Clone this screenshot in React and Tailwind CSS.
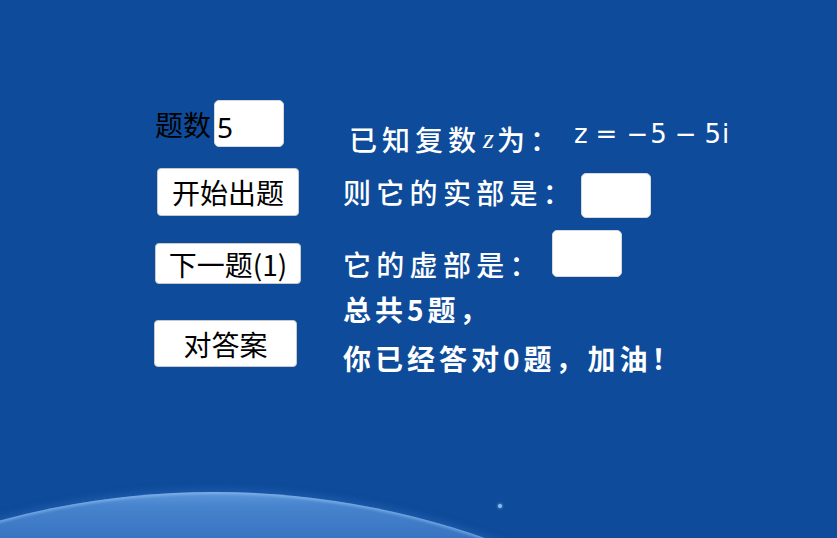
export default function App() {
  const cjk = { fontFamily: '"Noto Sans CJK SC", "Noto Sans", sans-serif' };
  return (
    <div className="relative h-[538px] w-full overflow-hidden bg-[#0e4b9a]" style={cjk}>
      {/* planet arc decoration */}
      <div className="absolute left-[-606px] top-[492px] h-[1640px] w-[1640px] rounded-full bg-[linear-gradient(to_bottom,#5c97da_0px,#4784cd_14px,#3672bf_50px)] shadow-[inset_0_2px_3px_rgba(150,195,245,0.6),0_-2px_8px_rgba(70,130,210,0.35)]" />
      <div className="absolute left-[498px] top-[504px] h-[4px] w-[4px] rounded-full bg-[#8dbbf0] shadow-[0_0_3px_#8dbbf0]" />

      <div className="relative flex pl-[154px] pt-[100px]">
        {/* left column */}
        <div className="flex w-[189px] flex-col items-start text-[28px] leading-none text-black">
          <div className="flex h-[47px] items-center">
            <span className="ml-[1px]">题数</span>
            <div className="ml-[3px] flex h-[47px] w-[70px] items-center rounded-[5px] border border-[#d8d8d8] bg-white pl-[2px] pt-[6px] text-[28px]" style={{ fontFamily: '"Noto Sans", sans-serif' }}>
              5
            </div>
          </div>
          <button className="ml-[3px] mt-[21px] flex h-[48px] w-[142px] items-center justify-center rounded-[4px] border border-[#c9c9c9] bg-white text-[28px] text-black">
            开始出题
          </button>
          <button className="ml-[1px] mt-[27px] flex h-[41px] w-[146px] items-center justify-center rounded-[4px] border border-[#c9c9c9] bg-white text-[28px] text-black">
            下一题(1)
          </button>
          <button className="mt-[36px] flex h-[47px] w-[143px] items-center justify-center rounded-[4px] border border-[#c9c9c9] bg-white text-[28px] text-black">
            对答案
          </button>
        </div>

        {/* right column */}
        <div className="flex flex-col pt-[15px] font-medium text-white">
          <div className="flex h-[48px] items-center pl-[6px] text-[28px] leading-none">
            <span className="tracking-[5px]">已知复数</span>
            <span className="ml-[2px] mr-[3px] text-[28px] italic" style={{ fontFamily: '"Liberation Serif", serif' }}>z</span>
            <span className="tracking-[5px]">为：</span>
            <span className="mb-[10px] ml-[11px] flex items-center text-[26px] font-normal leading-none" style={{ fontFamily: '"DejaVu Sans", sans-serif' }}>
              <span>z</span>
              <span className="ml-[8px]">=</span>
              <span className="ml-[9px]">−</span>
              <span className="ml-[2px]">5</span>
              <span className="ml-[8px]">−</span>
              <span className="ml-[8px]">5</span>
              <span className="ml-[1px]">i</span>
            </span>
          </div>
          <div className="mt-[10px] flex h-[45px] items-center text-[28px] leading-none">
            <span className="mb-[7px] tracking-[5.3px]">则它的实部是：</span>
            <div className="ml-[5px] h-[45px] w-[70px] rounded-[5px] border border-[#d8d8d8] bg-white" />
          </div>
          <div className="mt-[12px] flex h-[47px] items-center text-[28px] leading-none">
            <span className="mt-[20px] tracking-[5.3px]">它的虚部是：</span>
            <div className="ml-[9px] h-[47px] w-[70px] rounded-[5px] border border-[#d8d8d8] bg-white" />
          </div>
          <div className="mt-[8px] text-[28px] font-bold leading-[49px] tracking-[4px]">
            <div>总共5题，</div>
            <div>你已经答对0题，加油！</div>
          </div>
        </div>
      </div>
    </div>
  );
}
